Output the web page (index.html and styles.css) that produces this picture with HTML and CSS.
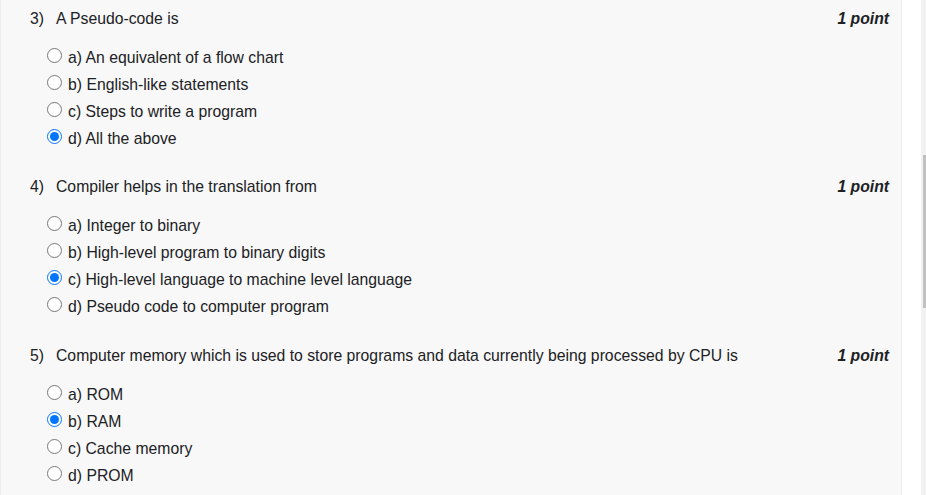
FILE: index.html
```html
<!DOCTYPE html>
<html lang="en">
<head>
    <meta charset="UTF-8">
    <meta name="viewport" content="width=device-width, initial-scale=1.0">
    <title>Quiz</title>
    <link rel="stylesheet" href="styles.css">
</head>
<body>
    <div class="page">
        <div class="panel">
            <div class="question">
                <div class="q-head">
                    <div class="q-title"><span class="q-num">3)</span>A Pseudo-code is</div>
                    <div class="q-points">1 point</div>
                </div>
                <ul class="options">
                    <li><label><input type="radio" name="q3">a) An equivalent of a flow chart</label></li>
                    <li><label><input type="radio" name="q3">b) English-like statements</label></li>
                    <li><label><input type="radio" name="q3">c) Steps to write a program</label></li>
                    <li><label><input type="radio" name="q3" checked>d) All the above</label></li>
                </ul>
            </div>
            <div class="question">
                <div class="q-head">
                    <div class="q-title"><span class="q-num">4)</span>Compiler helps in the translation from</div>
                    <div class="q-points">1 point</div>
                </div>
                <ul class="options">
                    <li><label><input type="radio" name="q4">a) Integer to binary</label></li>
                    <li><label><input type="radio" name="q4">b) High-level program to binary digits</label></li>
                    <li><label><input type="radio" name="q4" checked>c) High-level language to machine level language</label></li>
                    <li><label><input type="radio" name="q4">d) Pseudo code to computer program</label></li>
                </ul>
            </div>
            <div class="question">
                <div class="q-head">
                    <div class="q-title"><span class="q-num">5)</span>Computer memory which is used to store programs and data currently being processed by CPU is</div>
                    <div class="q-points">1 point</div>
                </div>
                <ul class="options">
                    <li><label><input type="radio" name="q5">a) ROM</label></li>
                    <li><label><input type="radio" name="q5" checked>b) RAM</label></li>
                    <li><label><input type="radio" name="q5">c) Cache memory</label></li>
                    <li><label><input type="radio" name="q5">d) PROM</label></li>
                </ul>
            </div>
        </div>
        <div class="gutter"></div>
        <div class="scrollbar">
            <div class="thumb"></div>
        </div>
    </div>
</body>
</html>
```

FILE: styles.css
```css
* {
    margin: 0;
    padding: 0;
    box-sizing: border-box;
}

html, body {
    height: 100%;
    overflow: hidden;
}

body {
    font-family: 'Liberation Sans', Arial, sans-serif;
    font-size: 15.75px;
    color: #202124;
    background-color: #ffffff;
}

.page {
    display: flex;
    height: 100%;
}

.panel {
    width: 902px;
    flex-shrink: 0;
    background-color: #f8f8f8;
    border-left: 1px solid #ededed;
    border-right: 1px solid #ededed;
    padding: 0 12px 0 29px;
}

.question {
    padding: 8.5px 0 17px;
}

.q-head {
    display: flex;
    justify-content: space-between;
    line-height: 20px;
    margin-bottom: 15px;
}

.q-num {
    display: inline-block;
    width: 26px;
}

.q-points {
    font-weight: bold;
    font-style: italic;
}

.options {
    list-style: none;
    padding-left: 17px;
}

.options li {
    line-height: 27px;
}

.options label {
    display: flex;
    align-items: flex-start;
}

.options input[type="radio"] {
    width: 15px;
    height: 15px;
    margin: 4px 6px 0 0;
    flex-shrink: 0;
}

.gutter {
    width: 19px;
    flex-shrink: 0;
}

.scrollbar {
    flex: 1;
    background-color: #f1f1f1;
    padding: 155px 0 0 2px;
}

.thumb {
    height: 153px;
    background-color: #c1c1c1;
}
```
